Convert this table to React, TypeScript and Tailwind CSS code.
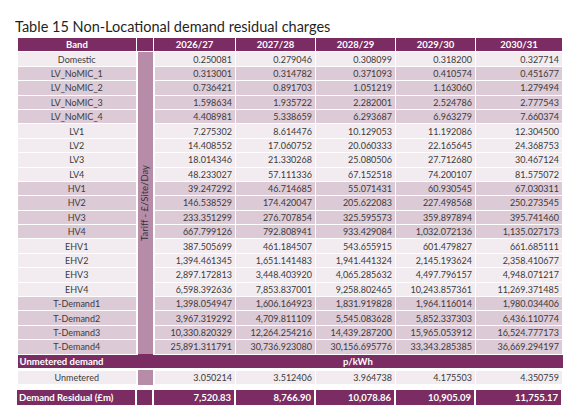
import React from 'react';

type Row = { band: string; values: string[]; shade: 'light' | 'dark' };

const years = ['2026/27', '2027/28', '2028/29', '2029/30', '2030/31'];

const rows: Row[] = [
  { band: 'Domestic', shade: 'light', values: ['0.250081', '0.279046', '0.308099', '0.318200', '0.327714'] },
  { band: 'LV_NoMIC_1', shade: 'dark', values: ['0.313001', '0.314782', '0.371093', '0.410574', '0.451677'] },
  { band: 'LV_NoMIC_2', shade: 'dark', values: ['0.736421', '0.891703', '1.051219', '1.163060', '1.279494'] },
  { band: 'LV_NoMIC_3', shade: 'dark', values: ['1.598634', '1.935722', '2.282001', '2.524786', '2.777543'] },
  { band: 'LV_NoMIC_4', shade: 'dark', values: ['4.408981', '5.338659', '6.293687', '6.963279', '7.660374'] },
  { band: 'LV1', shade: 'light', values: ['7.275302', '8.614476', '10.129053', '11.192086', '12.304500'] },
  { band: 'LV2', shade: 'light', values: ['14.408552', '17.060752', '20.060333', '22.165645', '24.368753'] },
  { band: 'LV3', shade: 'light', values: ['18.014346', '21.330268', '25.080506', '27.712680', '30.467124'] },
  { band: 'LV4', shade: 'light', values: ['48.233027', '57.111336', '67.152518', '74.200107', '81.575072'] },
  { band: 'HV1', shade: 'dark', values: ['39.247292', '46.714685', '55.071431', '60.930545', '67.030311'] },
  { band: 'HV2', shade: 'dark', values: ['146.538529', '174.420047', '205.622083', '227.498568', '250.273545'] },
  { band: 'HV3', shade: 'dark', values: ['233.351299', '276.707854', '325.595573', '359.897894', '395.741460'] },
  { band: 'HV4', shade: 'dark', values: ['667.799126', '792.808941', '933.429084', '1,032.072136', '1,135.027173'] },
  { band: 'EHV1', shade: 'light', values: ['387.505699', '461.184507', '543.655915', '601.479827', '661.685111'] },
  { band: 'EHV2', shade: 'light', values: ['1,394.461345', '1,651.141483', '1,941.441324', '2,145.193624', '2,358.410677'] },
  { band: 'EHV3', shade: 'light', values: ['2,897.172813', '3,448.403920', '4,065.285632', '4,497.796157', '4,948.071217'] },
  { band: 'EHV4', shade: 'light', values: ['6,598.392636', '7,853.837001', '9,258.802465', '10,243.857361', '11,269.371485'] },
  { band: 'T-Demand1', shade: 'dark', values: ['1,398.054947', '1,606.164923', '1,831.919828', '1,964.116014', '1,980.034406'] },
  { band: 'T-Demand2', shade: 'dark', values: ['3,967.319292', '4,709.811109', '5,545.083628', '5,852.337303', '6,436.110774'] },
  { band: 'T-Demand3', shade: 'dark', values: ['10,330.820329', '12,264.254216', '14,439.287200', '15,965.053912', '16,524.777173'] },
  { band: 'T-Demand4', shade: 'dark', values: ['25,891.311791', '30,736.923080', '30,156.695776', '33,343.285385', '36,669.294197'] },
];

const residual = ['7,520.83', '8,766.90', '10,078.86', '10,905.09', '11,755.17'];
const unmetered = ['3.050214', '3.512406', '3.964738', '4.175503', '4.350759'];

const Cols = () => (
  <colgroup>
    <col className="w-[119px]" />
    <col className="w-[17px]" />
    <col className="w-[82px]" />
    <col className="w-[80px]" />
    <col className="w-[80px]" />
    <col className="w-[80px]" />
    <col className="w-[87px]" />
  </colgroup>
);

const cell = 'border border-white px-[3px] leading-none';

export default function App() {
  return (
    <div className="w-[583px] h-[410px] bg-white pl-[15px] pt-[17px] font-['Lato',sans-serif] text-[#3b3b3b]">
      <h1 className="text-[14.5px] leading-[20px] text-[#1f1f1f] font-['Lato',sans-serif]">
        Table 15 Non-Locational demand residual charges
      </h1>
      <div className="ml-[2px] w-[546px]">
        <table className="w-full table-fixed border-collapse text-[9px]">
          <Cols />
          <thead>
            <tr className="h-[14.4px] bg-[#7b2d63] text-white font-bold text-[9.5px]">
              <th className={cell}>Band</th>
              <th className={cell}></th>
              {years.map((y) => (
                <th key={y} className={cell}>{y}</th>
              ))}
            </tr>
          </thead>
          <tbody>
            {rows.map((r, i) => (
              <tr key={r.band} className={`h-[14.4px] ${r.shade === 'light' ? 'bg-[#f2ecf0]' : 'bg-[#dccad6]'}`}>
                <td className={`${cell} text-center`}>{r.band}</td>
                {i === 0 && (
                  <td rowSpan={rows.length} className="border-x-2 border-white bg-[#b68ca9] p-0 align-middle">
                    <div className="flex items-center justify-center">
                      <span className="[writing-mode:vertical-rl] rotate-180 text-[9.5px] text-[#333] whitespace-nowrap">
                        Tariff - £/Site/Day
                      </span>
                    </div>
                  </td>
                )}
                {r.values.map((v, j) => (
                  <td key={j} className={`${cell} text-right`}>{v}</td>
                ))}
              </tr>
            ))}
            <tr className="h-[14.4px] bg-[#7b2d63] text-white font-bold text-[9.5px]">
              <td colSpan={2} className="px-[2px] leading-none text-left">Unmetered demand</td>
              <td colSpan={5} className="leading-none text-center">p/kWh</td>
            </tr>
            <tr className="h-[2px]"><td colSpan={7} className="p-0"></td></tr>
            <tr className="h-[14.4px] bg-[#f2ecf0]">
              <td className={`${cell} text-center`}>Unmetered</td>
              <td className="border-x-2 border-white bg-[#b68ca9] p-0"></td>
              {unmetered.map((v, j) => (
                <td key={j} className={`${cell} text-right`}>{v}</td>
              ))}
            </tr>
          </tbody>
        </table>
        <table className="mt-[5px] w-full table-fixed border-collapse text-[9.5px] font-bold text-white">
          <Cols />
          <tbody>
            <tr className="h-[15px] bg-[#7b2d63]">
              <td className="border-r-2 border-white px-[2px] leading-none text-left">Demand Residual (£m)</td>
              <td className="border-x-2 border-white p-0"></td>
              {residual.map((v, j) => (
                <td key={j} className="border-x-2 border-white px-[3px] leading-none text-right">{v}</td>
              ))}
            </tr>
          </tbody>
        </table>
      </div>
    </div>
  );
}
